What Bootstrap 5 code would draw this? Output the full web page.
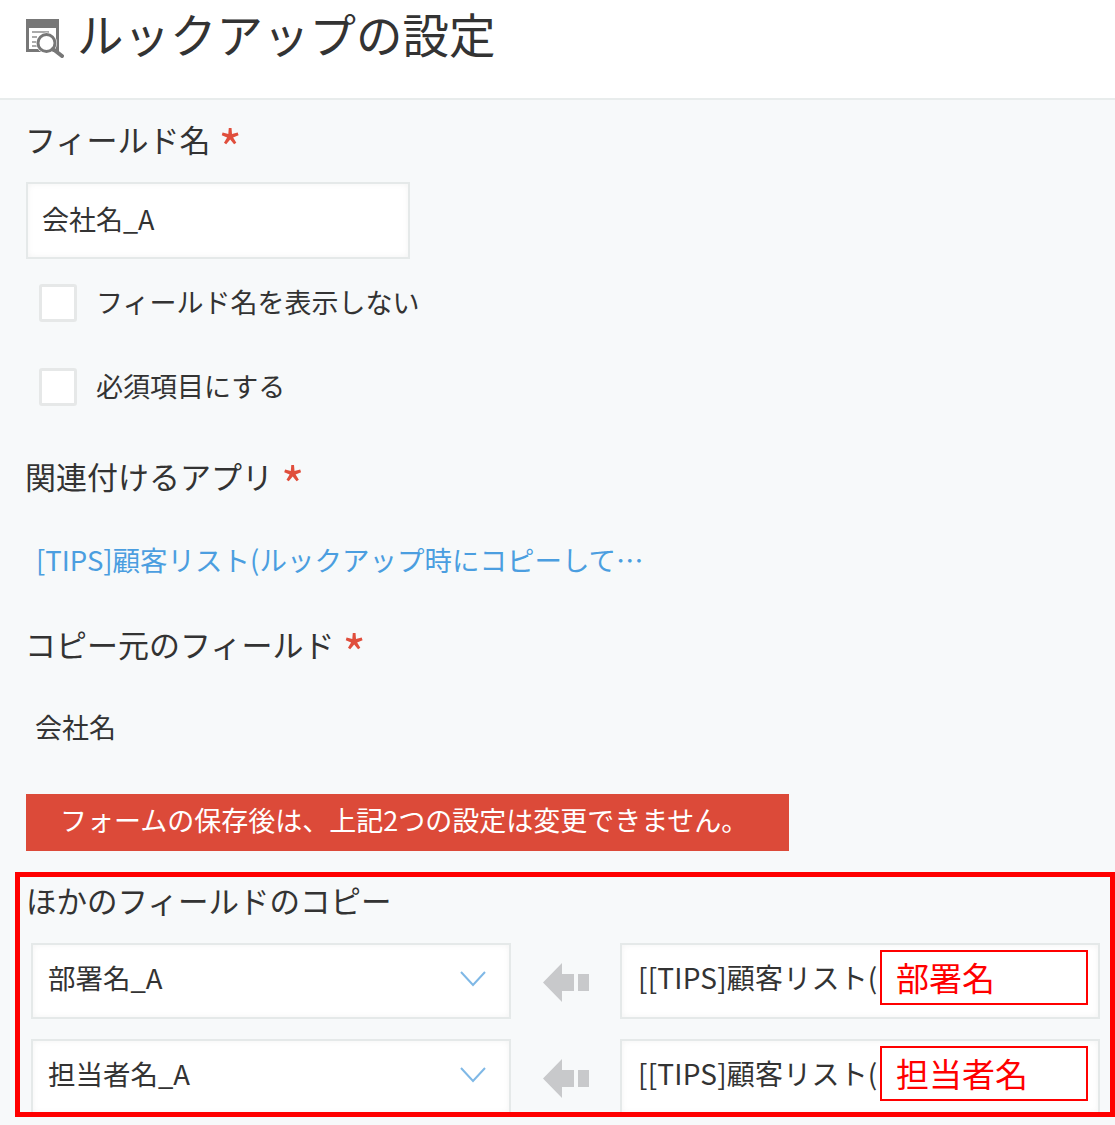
<!DOCTYPE html>
<html lang="ja">
<head>
<meta charset="utf-8">
<title>ルックアップの設定</title>
<link href="https://cdn.jsdelivr.net/npm/bootstrap@5.3.0/dist/css/bootstrap.min.css" rel="stylesheet">
<style>
html,body{height:1125px;overflow:hidden}
body{background:#f7f9fa;color:#333;font-family:"Noto Sans CJK JP","Noto Sans",sans-serif;font-size:27px;line-height:40px}
.top-bar{height:100px;background:#fff;border-bottom:2px solid #e8ecec;padding:7px 0 0 26px;gap:13px}
.top-bar svg{margin-top:12px}
.top-bar h1{font-size:46.5px;line-height:1.1;margin:0;font-weight:400;color:#333}
.pane{padding:0 0 0 26px}
.fld-label{font-size:31px;line-height:40px;margin:0 0 0 -1px}
.req{color:#e04e3c;margin-left:8px;font-size:50px;line-height:0;vertical-align:-16px}
.box-input{background:#fff;border:2px solid #e5e9e9;box-shadow:inset 0 0 6px rgba(0,0,0,.05);height:77px;display:flex;align-items:center;border-radius:0;color:#333;font-size:27px;padding-bottom:4px}
.name-input{width:384px;padding-left:14px;padding-right:14px;margin-top:23px}
.chk-row{margin:0 0 0 13px;gap:19px;height:38px}
.chk-row .form-check-input{width:38px;height:38px;margin:0;float:none;border:3px solid #e6e8e8;border-radius:3px;background-color:#fff;flex:none}
.chk-row span{margin-top:-3px}
.ref-link{color:#4b9ee0;text-decoration:none;margin-left:10px;font-size:27.5px}
.plain-val{margin-left:9px;font-size:27px}
.warn-bar{width:763px;height:57px;background:#dc4a39;color:#fff;padding-left:34px;padding-bottom:5px;font-size:27px;display:flex;align-items:center}
.copy-frame{position:relative;margin-left:-11px;margin-top:21px;width:1100px;height:245px;border:5px solid #f00;overflow:hidden;padding:0 0 0 11px}
.copy-frame .fld-label{margin-left:-5px;font-size:30.5px}
.map-row{width:1069px;height:76px;margin-bottom:20px;display:flex;align-items:center}
.map-row .box-input{height:76px;width:480px;flex:none;padding:0 15px 8px;font-size:27.5px}
.map-row .src-box{font-size:28px;letter-spacing:.2px;padding-left:16px}
.map-arrow{width:109px;flex:none;display:flex;justify-content:center;padding-top:3px}
.sel-box svg{margin-top:4px}
.sel-box{justify-content:space-between;padding-right:23px!important}
.anno{position:absolute;left:860px;width:208px;height:55px;background:#fff;border:2px solid #f00;color:#f00;font-size:33px;line-height:51px;padding-left:14px}
</style>
</head>
<body>
<header class="top-bar d-flex align-items-start">
  <svg width="38" height="39" viewBox="0 0 38 39" aria-hidden="true">
    <path d="M0 0h33v33H0z" fill="#777"/>
    <path d="M3 9h27v21H3z" fill="#fff"/>
    <path d="M6 12h17v2H6zM6 17h5v2H6zM6 22h5v2H6zM6 26h6v2H6z" fill="#aaa"/>
    <circle cx="20.500" cy="24" r="10.500" fill="#fff"/>
    <circle cx="20.500" cy="24" r="8.500" fill="none" stroke="#777" stroke-width="3"/>
    <path d="M27 30l9 7" stroke="#777" stroke-width="4" stroke-linecap="round"/>
  </svg>
  <h1>ルックアップの設定</h1>
</header>
<main class="pane">
  <p class="fld-label" style="margin-top:19px">フィールド名<span class="req">*</span></p>
  <div class="box-input name-input">会社名_A</div>
  <div class="chk-row d-flex align-items-center" style="margin-top:25px"><input class="form-check-input" type="checkbox" aria-label="フィールド名を表示しない"><span>フィールド名を表示しない</span></div>
  <div class="chk-row d-flex align-items-center" style="margin-top:46px"><input class="form-check-input" type="checkbox" aria-label="必須項目にする"><span>必須項目にする</span></div>
  <p class="fld-label" style="margin-top:50px">関連付けるアプリ<span class="req">*</span></p>
  <div style="margin-top:43px"><a class="ref-link" href="#">[TIPS]顧客リスト(ルックアップ時にコピーして…</a></div>
  <p class="fld-label" style="margin-top:44px">コピー元のフィールド<span class="req">*</span></p>
  <div class="plain-val" style="margin-top:43px">会社名</div>
  <div class="warn-bar" style="margin-top:47px">フォームの保存後は、上記2つの設定は変更できません。</div>
  <section class="copy-frame">
    <p class="fld-label" style="margin-top:3px;margin-bottom:23px">ほかのフィールドのコピー</p>
    <div class="map-row">
      <div class="box-input sel-box"><span>部署名_A</span>
        <svg width="26" height="16" viewBox="0 0 26 16" aria-hidden="true"><path d="M1 1l12 13L25 1" fill="none" stroke="#7fb8e6" stroke-width="2"/></svg></div>
      <div class="map-arrow"><svg width="46" height="39" viewBox="0 0 46 39" aria-hidden="true"><path d="M0 19.500L19 0v11h12v17H19v11z" fill="#c8c9cb"/><path d="M35 11h11v17H35z" fill="#c8c9cb"/></svg></div>
      <div class="box-input src-box"><span>[[TIPS]顧客リスト(</span></div>
    </div>
    <div class="map-row">
      <div class="box-input sel-box"><span>担当者名_A</span>
        <svg width="26" height="16" viewBox="0 0 26 16" aria-hidden="true"><path d="M1 1l12 13L25 1" fill="none" stroke="#7fb8e6" stroke-width="2"/></svg></div>
      <div class="map-arrow"><svg width="46" height="39" viewBox="0 0 46 39" aria-hidden="true"><path d="M0 19.500L19 0v11h12v17H19v11z" fill="#c8c9cb"/><path d="M35 11h11v17H35z" fill="#c8c9cb"/></svg></div>
      <div class="box-input src-box"><span>[[TIPS]顧客リスト(</span></div>
    </div>
    <div class="anno" style="top:73px">部署名</div>
    <div class="anno" style="top:169px">担当者名</div>
  </section>
</main>
</body>
</html>
